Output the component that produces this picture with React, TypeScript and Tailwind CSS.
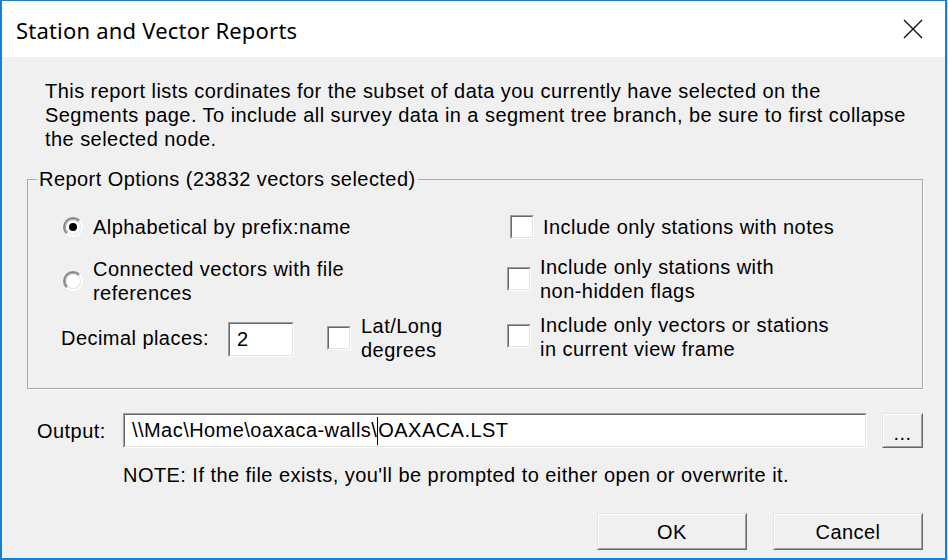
import React from "react";

const F = { fontFamily: '"Liberation Sans", Arial, sans-serif', letterSpacing: "0.45px" };

function Sunken({ className = "", children }: { className?: string; children?: React.ReactNode }) {
  return (
    <div className={"border border-t-[#a0a0a0] border-l-[#a0a0a0] border-b-white border-r-white " + className}>
      <div className="w-full h-full border border-t-[#696969] border-l-[#696969] border-b-[#e3e3e3] border-r-[#e3e3e3] bg-white">
        {children}
      </div>
    </div>
  );
}

function Check() {
  return <Sunken className="w-[24px] h-[24px] shrink-0" />;
}

function Radio({ on }: { on?: boolean }) {
  return (
    <div className="w-[20px] h-[20px] rounded-full border-2 border-t-[#8a8a8a] border-l-[#8a8a8a] border-b-white border-r-white shrink-0">
      <div className="w-full h-full rounded-full border border-t-[#a0a0a0] border-l-[#a0a0a0] border-b-[#e3e3e3] border-r-[#e3e3e3] bg-white flex items-center justify-center">
        {on && <div className="w-[8px] h-[8px] rounded-full bg-black" />}
      </div>
    </div>
  );
}

function Btn({ className = "", children }: { className?: string; children?: React.ReactNode }) {
  return (
    <div className={"border border-t-[#e3e3e3] border-l-[#e3e3e3] border-b-[#696969] border-r-[#696969] " + className}>
      <div className="w-full h-full border border-t-white border-l-white border-b-[#a0a0a0] border-r-[#a0a0a0] bg-[#f0f0f0] flex items-center justify-center">
        {children}
      </div>
    </div>
  );
}

export default function App() {
  return (
    <div className="w-[948px] h-[560px] bg-[#d8d8d8] flex">
      <div className="w-[947px] h-[560px] flex flex-col border-l-2 border-r-2 border-t border-b-2 border-[#1a7fd4] bg-[#f0f0f0] text-black">
        <div className="h-[56px] bg-white flex items-center justify-between pl-[14px] pr-[22px] shrink-0">
          <span className="text-[22px] mt-[3px]" style={{ fontFamily: '"Noto Sans", "Open Sans", sans-serif', letterSpacing: "0.2px" }}>
            Station and Vector Reports
          </span>
          <svg width="20" height="20" viewBox="0 0 20 20" className="mt-[-1px]">
            <path d="M1 1 L19 19 M19 1 L1 19" stroke="#111" strokeWidth="1.4" fill="none" />
          </svg>
        </div>
        <div className="flex-1 flex flex-col pl-[25px] pr-[22px] text-[20px] leading-[24px]" style={F}>
          <p className="mt-[22px] ml-[18px] whitespace-nowrap">
            This report lists cordinates for the subset of data you currently have selected on the
            <br />
            Segments page. To include all survey data in a segment tree branch, be sure to first collapse
            <br />
            the selected node.
          </p>
          <fieldset className="mt-[16px] border border-[#a9a9a9] p-0 m-0 shadow-[1px_1px_0_white]">
            <legend className="ml-[9px] px-[2px] leading-[24px]">Report Options (23832 vectors selected)</legend>
            <div className="flex pl-[33px] pt-[24px] pb-[26px]">
              <div className="w-[446px] flex flex-col">
                <div className="h-[24px] flex items-center">
                  <div className="ml-[2px] mr-[10px]"><Radio on /></div>
                  <span>Alphabetical by prefix:name</span>
                </div>
                <div className="mt-[18px] h-[48px] flex items-center">
                  <div className="ml-[2px] mr-[10px]"><Radio /></div>
                  <span>Connected vectors with file<br />references</span>
                </div>
                <div className="mt-[9px] h-[48px] flex items-center">
                  <span className="w-[167px]">Decimal places:</span>
                  <Sunken className="w-[66px] h-[35px] mt-[3px]">
                    <div className="pl-[7px] leading-[30px]">2</div>
                  </Sunken>
                  <div className="ml-[33px] mr-[10px]"><Check /></div>
                  <span>Lat/Long<br />degrees</span>
                </div>
              </div>
              <div className="flex flex-col">
                <div className="h-[24px] flex items-center">
                  <div className="ml-[3px] mr-[9px]"><Check /></div>
                  <span>Include only stations with notes</span>
                </div>
                <div className="mt-[16px] h-[48px] flex items-center">
                  <div className="mr-[9px]"><Check /></div>
                  <span>Include only stations with<br />non-hidden flags</span>
                </div>
                <div className="mt-[10px] h-[48px] flex items-center">
                  <div className="mr-[9px] mt-[-3px]"><Check /></div>
                  <span>Include only vectors or stations<br />in current view frame</span>
                </div>
              </div>
            </div>
          </fieldset>
          <div className="mt-[24px] flex items-center">
            <span className="ml-[10px] w-[86px]">Output:</span>
            <Sunken className="w-[744px] h-[35px]">
              <div className="pl-[7px] leading-[31px] whitespace-nowrap flex items-center h-full">
                <span>\\Mac\Home\oaxaca-walls\</span>
                <span className="inline-block w-px h-[28px] bg-black" />
                <span>OAXACA.LST</span>
              </div>
            </Sunken>
            <Btn className="ml-[15px] w-[41px] h-[35px]">
              <span className="leading-[20px] mt-[4px]">...</span>
            </Btn>
          </div>
          <div className="mt-[15px] ml-[96px] whitespace-nowrap">
            NOTE: If the file exists, you'll be prompted to either open or overwrite it.
          </div>
          <div className="mt-[26px] flex justify-end gap-[26px]">
            <Btn className="w-[150px] h-[37px]">OK</Btn>
            <Btn className="w-[150px] h-[37px]">Cancel</Btn>
          </div>
        </div>
      </div>
    </div>
  );
}
